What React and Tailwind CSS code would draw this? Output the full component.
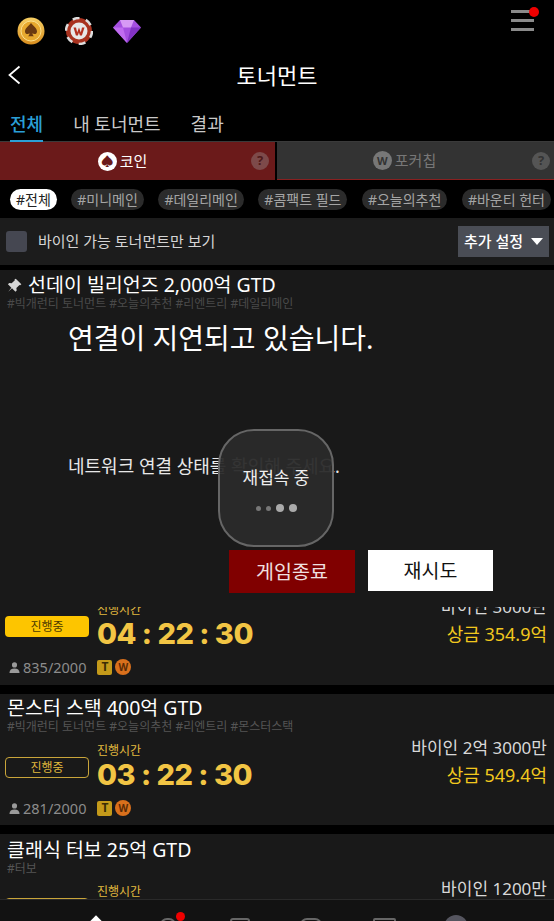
const chips = ["#전체", "#미니메인", "#데일리메인", "#콤팩트 필드", "#오늘의추천", "#바운티 헌터"];

function SpadeCoin() {
  return (
    <svg width="28" height="28" viewBox="0 0 28 28">
      <defs>
        <linearGradient id="coinGold" x1="0" y1="0" x2="0" y2="1">
          <stop offset="0" stopColor="#f7cf63" />
          <stop offset="1" stopColor="#d98e1f" />
        </linearGradient>
      </defs>
      <circle cx="14" cy="14" r="13.5" fill="url(#coinGold)" />
      <circle cx="14" cy="14" r="10" fill="#e8a92f" stroke="#fbe08c" strokeWidth="1" />
      <path d="M14 6c2 3 6 5 6 8.500 0 2.400-2.600 3.400-4.600 1.800.2 1.300.7 2.200 1.600 3h-6c.9-.8 1.400-1.700 1.600-3-2 1.600-4.600.6-4.600-1.800C8 11 12 9 14 6z" fill="#6b3a10" />
    </svg>
  );
}

function ChipIcon() {
  return (
    <svg width="28" height="28" viewBox="0 0 28 28">
      <circle cx="14" cy="14" r="13" fill="#a8321f" />
      <circle cx="14" cy="14" r="13" fill="none" stroke="#ddd" strokeWidth="2.500" strokeDasharray="7 6.600" />
      <circle cx="14" cy="14" r="8.500" fill="#e8e8e8" />
      <path d="M8.500 10.500h2.500l1.200 5 1.800-5 1.800 5 1.200-5h2.500l-2.600 8h-2l-1-3-1 3h-2z" fill="#b5301f" />
    </svg>
  );
}

function Diamond() {
  return (
    <svg width="28" height="24" viewBox="0 0 28 24">
      <path d="M7 1h14l7 7.500L14 24 0 8.500z" fill="#a54fe0" />
      <path d="M7 1h14l-3 7.500H10z" fill="#d79af5" />
      <path d="M0 8.500h10L14 24z" fill="#c06cf0" />
      <path d="M28 8.500H18L14 24z" fill="#8232c4" />
    </svg>
  );
}

function PersonIcon() {
  return (
    <svg width="11" height="11" viewBox="0 0 12 12" fill="#9a9a9a">
      <circle cx="6" cy="3.200" r="2.800" />
      <path d="M0.500 12c0-3.400 2.200-5 5.500-5s5.500 1.600 5.500 5z" />
    </svg>
  );
}

function Badges() {
  return (
    <div className="flex items-center gap-[3px]">
      <span className="flex h-[15px] w-[15px] items-center justify-center rounded-[2px] bg-[#c49a1a] text-[12px] font-bold leading-none text-[#3a2d05]">T</span>
      <span className="flex h-[16px] w-[16px] items-center justify-center rounded-full bg-[#d9701c] text-[10px] font-bold leading-none text-[#5a2a05]">W</span>
    </div>
  );
}

function TimerRow({ filled, time, buyin, prize }) {
  return (
    <div className="flex items-start justify-between pr-[7px]">
      <div className="flex gap-[8px] pl-[5px]">
        <div className="pt-[14px]">
          <div
            className={
              filled
                ? "flex h-[21px] w-[84px] items-center justify-center rounded-[4px] bg-[#fdc500] text-[12px] text-[#4b3a00]"
                : "flex h-[21px] w-[84px] items-center justify-center rounded-[4px] border border-[#c9a53a] text-[12px] text-[#e0b83c]"
            }
          >
            {time && "진행중"}
          </div>
        </div>
        <div className="flex flex-col">
          <span className="text-[12px] leading-[16px] text-[#e2b93f]">진행시간</span>
          <span className="h-[32px] font-['Inter'] text-[29px] font-extrabold leading-[32px] tracking-[-0.5px] whitespace-pre text-[#f2c544]">{time}</span>
        </div>
      </div>
      <div className="-mt-[7px] flex flex-col items-end">
        <span className="text-[17px] leading-[24px] text-[#d8d8d8]">{buyin}</span>
        <span className="text-[18px] leading-[30px] text-[#f2c81e]">{prize}</span>
      </div>
    </div>
  );
}

function PlayerRow({ players }) {
  return (
    <div className="mt-[8px] flex items-center gap-[3px] pl-[9px] text-[14.500px] leading-[18px] text-[#8c8c8c]">
      <PersonIcon />
      <span className="mr-[8px]">{players}</span>
      <Badges />
    </div>
  );
}

function Modal() {
  return (
    <div className="absolute inset-x-0 top-[43px] flex h-[294px] flex-col bg-[#191919] pt-[7px] pl-[68px] text-white">
      <div className="text-[28px] leading-[36px]">연결이 지연되고 있습니다.</div>
      <div className="mt-[98px] text-[18px] leading-[24px] text-[#e8e8e8]">네트워크 연결 상태를 확인해 주세요.</div>
      <div className="mt-[72px] ml-[161px] flex items-start gap-[13px]">
        <button className="h-[43px] w-[126px] bg-[#800000] text-[19.500px] text-[#f0e0e0]">게임종료</button>
        <button className="h-[41px] w-[125px] bg-white text-[19.500px] text-[#111]">재시도</button>
      </div>
    </div>
  );
}

function Reconnect() {
  return (
    <div className="absolute top-[159px] left-[218px] flex h-[118px] w-[116px] flex-col items-center rounded-[36px] border-2 border-[#666] bg-[#2a2a2a]/95 pt-[35px]">
      <span className="text-[17px] leading-[24px] text-[#eee]">재접속 중</span>
      <div className="mt-[14px] flex items-center gap-[5px]">
        <span className="h-[5px] w-[5px] rounded-full bg-[#777]" />
        <span className="h-[5px] w-[5px] rounded-full bg-[#777]" />
        <span className="h-[8px] w-[8px] rounded-full bg-[#aaa]" />
        <span className="h-[8px] w-[8px] rounded-full bg-[#aaa]" />
      </div>
    </div>
  );
}

export default function App() {
  return (
    <div className="flex h-[921px] w-[554px] flex-col overflow-hidden bg-black font-['Noto_Sans','Noto_Sans_CJK_KR',sans-serif] text-white">
      {/* top bar */}
      <div className="relative flex h-[62px] shrink-0 items-center gap-[20px] pl-[17px]">
        <SpadeCoin />
        <ChipIcon />
        <Diamond />
        <div className="absolute top-[10px] left-[511px] flex w-[23px] flex-col gap-[6px]">
          <span className="h-[3px] bg-[#8a8a8a]" />
          <span className="h-[3px] bg-[#8a8a8a]" />
          <span className="h-[3px] bg-[#8a8a8a]" />
        </div>
        <span className="absolute top-[7px] left-[529px] h-[10px] w-[10px] rounded-full bg-[#f00000]" />
      </div>

      {/* title */}
      <div className="relative flex h-[27px] shrink-0 items-center justify-center text-[22px]">
        <svg className="absolute top-[3px] left-[8px]" width="14" height="20" viewBox="0 0 14 20" fill="none" stroke="#fff" strokeWidth="1.750">
          <polyline points="11.500,1.500 1.500,10 11.500,18.500" />
        </svg>
        토너먼트
      </div>

      {/* tabs */}
      <div className="mt-[20px] flex h-[33px] shrink-0 items-start gap-[30px] border-b border-[#3a3a3a] pl-[10px] text-[18px] leading-[30px] text-[#c9c9c9]">
        <span className="relative h-[33px] font-medium text-[#2a9fd6]">
          전체
          <span className="absolute inset-x-0 bottom-0 h-[2px] bg-[#2a9fd6]" />
        </span>
        <span>내 토너먼트</span>
        <span>결과</span>
      </div>

      {/* coin / chip switch */}
      <div className="flex h-[38px] shrink-0 gap-[2px]">
        <div className="relative flex w-[275px] items-center justify-center gap-[3px] bg-[#6b1a1a] pr-[30px] text-[15px] text-white">
          <span className="flex h-[19px] w-[19px] items-center justify-center rounded-full bg-white text-[13px] leading-none text-[#6b1a1a]">♠</span>
          코인
          <span className="absolute top-[10px] left-[251px] flex h-[18px] w-[18px] items-center justify-center rounded-full bg-[#7d4a4a] text-[13px] font-bold text-[#4f1a1a]">?</span>
        </div>
        <div className="relative flex flex-1 items-center justify-center gap-[3px] border-b border-[#8a2020] bg-[#333] pr-[22px] text-[15px] text-[#777]">
          <span className="flex h-[19px] w-[19px] items-center justify-center rounded-full bg-[#777] text-[11px] font-bold leading-none text-[#333]">W</span>
          포커칩
          <span className="absolute top-[10px] left-[255px] flex h-[18px] w-[18px] items-center justify-center rounded-full bg-[#555] text-[13px] font-bold text-[#333]">?</span>
        </div>
      </div>

      {/* hash chips */}
      <div className="flex shrink-0 gap-[14.500px] pt-[9px] pl-[10px] whitespace-nowrap">
        {chips.map((c, i) => (
          <span
            key={c}
            className={
              i === 0
                ? "rounded-full bg-white px-[6px] text-[14px] leading-[21px] text-[#222]"
                : "rounded-full bg-[#2b2b2b] px-[6px] text-[14px] leading-[21px] text-[#a5a5a5]"
            }
          >
            {c}
          </span>
        ))}
      </div>

      {/* filter row */}
      <div className="mt-[8px] flex h-[47px] shrink-0 items-center justify-between bg-[#1c1c1c] pr-[5px] pl-[6px]">
        <div className="flex items-center gap-[11px]">
          <span className="h-[21px] w-[21px] rounded-[3px] bg-[#454751]" />
          <span className="text-[15px] text-[#d5d5d5]">바이인 가능 토너먼트만 보기</span>
        </div>
        <div className="flex h-[31px] w-[91px] items-center justify-center gap-[8px] bg-[#4a4d55] text-[15px] font-medium text-white">
          추가 설정
          <span className="h-0 w-0 border-x-[6px] border-t-[7px] border-x-transparent border-t-white" />
        </div>
      </div>

      {/* tournament list */}
      <div className="mt-[5px] flex min-h-0 flex-1 flex-col gap-[9px] overflow-hidden">
        <div className="relative h-[415px] shrink-0 bg-[#191919]">
          <div className="flex items-center gap-[6px] pt-[2px] pl-[7px] text-[19.500px] leading-[26px]">
            <svg width="15" height="15" viewBox="0 0 24 24" fill="#d5d5d5">
              <path d="M14 1l9 9-2 1.500-1-.5-5 5 .5 4-2 2-5.500-5.500L2 22l5-6.500L1.500 10l2-2 4 .5 5-5-.5-1z" />
            </svg>
            선데이 빌리언즈 2,000억 GTD
          </div>
          <div className="pl-[7px] text-[12px] leading-[12px] text-[#4a4a4a]">#빅개런티 토너먼트 #오늘의추천 #리엔트리 #데일리메인</div>
          <div className="mt-[292px]">
            <TimerRow filled time="04 : 22 : 30" buyin="바이인 3000만" prize="상금 354.9억" />
            <PlayerRow players="835/2000" />
          </div>
          <Modal />
          <Reconnect />
        </div>

        <div className="h-[131px] shrink-0 bg-[#191919]">
          <div className="pt-[1px] pl-[7px] text-[19.500px] leading-[26px]">몬스터 스택 400억 GTD</div>
          <div className="pl-[7px] text-[12px] leading-[12px] text-[#555]">#빅개런티 토너먼트 #오늘의추천 #리엔트리 #몬스터스택</div>
          <div className="mt-[10px]">
            <TimerRow time="03 : 22 : 30" buyin="바이인 2억 3000만" prize="상금 549.4억" />
            <PlayerRow players="281/2000" />
          </div>
        </div>

        <div className="shrink-0 bg-[#191919]">
          <div className="pt-[3px] pl-[7px] text-[19.500px] leading-[26px]">클래식 터보 25억 GTD</div>
          <div className="pl-[7px] text-[12px] leading-[12px] text-[#555]">#터보</div>
          <div className="mt-[9px]">
            <TimerRow time="" buyin="바이인 1200만" prize="" />
          </div>
        </div>
      </div>

      {/* bottom nav, only the top of its icons is in view */}
      <div className="relative h-[22px] shrink-0 border-t border-[#2a2a2a] bg-[#121212]">
        <span className="absolute top-[17px] left-[92px] h-[8px] w-[8px] rotate-45 bg-white" />
        <span className="absolute top-[18px] left-[160px] h-[14px] w-[16px] rounded-full border-2 border-[#666]" />
        <span className="absolute top-[12px] left-[176px] h-[9px] w-[9px] rounded-full bg-[#f00000]" />
        <span className="absolute top-[18px] left-[230px] h-[14px] w-[20px] rounded-[3px] border-2 border-[#666]" />
        <span className="absolute top-[18px] left-[300px] h-[14px] w-[22px] rounded-full border-2 border-[#666]" />
        <span className="absolute top-[18px] left-[373px] h-[14px] w-[23px] rounded-[2px] border-2 border-[#666]" />
        <span className="absolute top-[15px] left-[444px] h-[24px] w-[24px] rounded-full bg-[#55555f]" />
      </div>
    </div>
  );
}
